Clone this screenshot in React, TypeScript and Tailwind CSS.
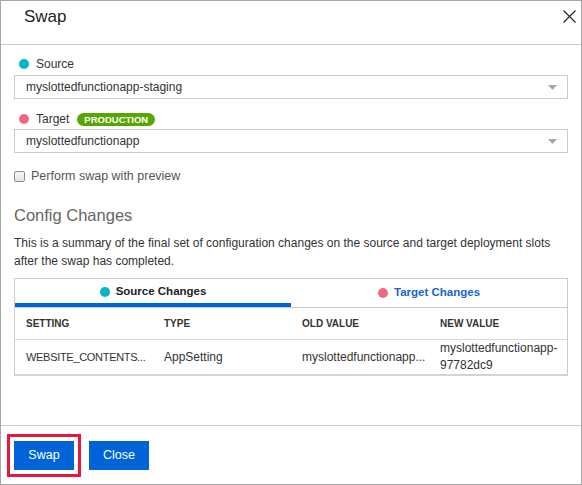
import React from 'react';

const font = "font-['Liberation_Sans',Arial,sans-serif]";

function Dot({ color }: { color: string }) {
  return <span className={`inline-block w-[10px] h-[10px] rounded-full ${color}`} />;
}

function Select({ value }: { value: string }) {
  return (
    <div className="flex items-center justify-between h-[24px] border border-[#cccccc] pl-[11px] pr-[10px] text-[12px] text-[#333333]">
      <span>{value}</span>
      <svg width="9" height="5" viewBox="0 0 9 5">
        <path d="M0 0 L9 0 L4.5 5 Z" fill="#a6a6a6" />
      </svg>
    </div>
  );
}

const columns = ['SETTING', 'TYPE', 'OLD VALUE', 'NEW VALUE'];

export default function App() {
  return (
    <div className={`${font} w-[582px] h-[485px] flex flex-col bg-white border border-[#a6a6a6] text-[#333333]`}>
      {/* header */}
      <div className="flex items-start justify-between h-[44px] border-b border-[#cccccc] shrink-0">
        <h1 className="pl-[23px] pt-[5px] text-[17px] leading-[22px] text-[#1e1e1e]">Swap</h1>
        <svg className="mt-[9px] mr-[5px]" width="13" height="13" viewBox="0 0 13 13">
          <path d="M0.5 0.5 L12.5 12.5 M12.5 0.5 L0.5 12.5" stroke="#222222" strokeWidth="1.1" />
        </svg>
      </div>

      {/* body */}
      <div className="flex-1 px-[13px] pt-[9px]">
        <div className="flex items-center gap-[7px] h-[20px] mb-[1px] pl-[5px] text-[12px]">
          <Dot color="bg-[#00b7c3]" />
          <span>Source</span>
        </div>
        <Select value="myslottedfunctionapp-staging" />

        <div className="flex items-center gap-[7px] h-[20px] mt-[10px] pl-[5px] text-[12px]">
          <Dot color="bg-[#f06a7f]" />
          <span>Target</span>
          <span className="ml-[1px] h-[13px] px-[7px] rounded-full bg-[#58a600] text-white text-[9.5px] font-bold leading-[13px]">
            PRODUCTION
          </span>
        </div>
        <Select value="myslottedfunctionapp" />

        <div className="flex items-center gap-[6px] h-[20px] mt-[13px] text-[12.5px] text-[#555555]">
          <span className="w-[11px] h-[11px] rounded-[2px] border border-[#8f8f8f] bg-gradient-to-b from-[#f7f7f7] to-[#e3e3e3]" />
          <span>Perform swap with preview</span>
        </div>

        <h2 className="mt-[18px] text-[16.5px] leading-[22px] font-light text-[#666666]">Config Changes</h2>
        <p className="mt-[8px] text-[12px] leading-[18px] text-[#333333]">
          This is a summary of the final set of configuration changes on the source and target deployment slots
          after the swap has completed.
        </p>

        {/* changes table */}
        <div className="mt-[8px] border border-[#cccccc] border-b-2 border-b-[#d4d4d4]">
          <div className="grid grid-cols-2 border-b border-[#cccccc]">
            <div className="flex flex-col">
              <div className="flex items-center justify-center gap-[6px] h-[24px] pt-[1px] text-[11.5px] font-bold text-[#222222]">
                <Dot color="bg-[#00b7c3]" />
                <span>Source Changes</span>
              </div>
              <div className="h-[4px] bg-[#0063d8]" />
            </div>
            <div className="flex items-center justify-center gap-[6px] h-[28px] text-[11.5px] font-bold text-[#1565d0]">
              <Dot color="bg-[#f06a7f]" />
              <span>Target Changes</span>
            </div>
          </div>

          <div className="grid grid-cols-4 h-[32px] items-center border-b border-[#d9d9d9]">
            {columns.map((c) => (
              <div key={c} className="pl-[11px] text-[10px] font-bold text-[#333333]">
                {c}
              </div>
            ))}
          </div>

          <div className="grid grid-cols-4 h-[34px] items-center text-[12px] text-[#333333]">
            <div className="pl-[11px] whitespace-nowrap text-[11px] tracking-[-0.3px]">WEBSITE_CONTENTS...</div>
            <div className="pl-[11px]">AppSetting</div>
            <div className="pl-[11px] whitespace-nowrap">myslottedfunctionapp...</div>
            <div className="pl-[11px] pr-[6px] leading-[17px]">myslottedfunctionapp-97782dc9</div>
          </div>
        </div>
      </div>

      {/* footer */}
      <div className="shrink-0 h-[59px] border-t border-[#cccccc] flex items-start gap-[15px] pl-[13px] pt-[15px]">
        <button className="w-[60px] h-[29px] bg-[#0063d8] text-white text-[12.5px] ring-[3px] ring-[#e8173c] ring-offset-[4px] ring-offset-white">
          Swap
        </button>
        <button className="w-[60px] h-[29px] bg-[#0063d8] text-white text-[12.5px]">Close</button>
      </div>
    </div>
  );
}
